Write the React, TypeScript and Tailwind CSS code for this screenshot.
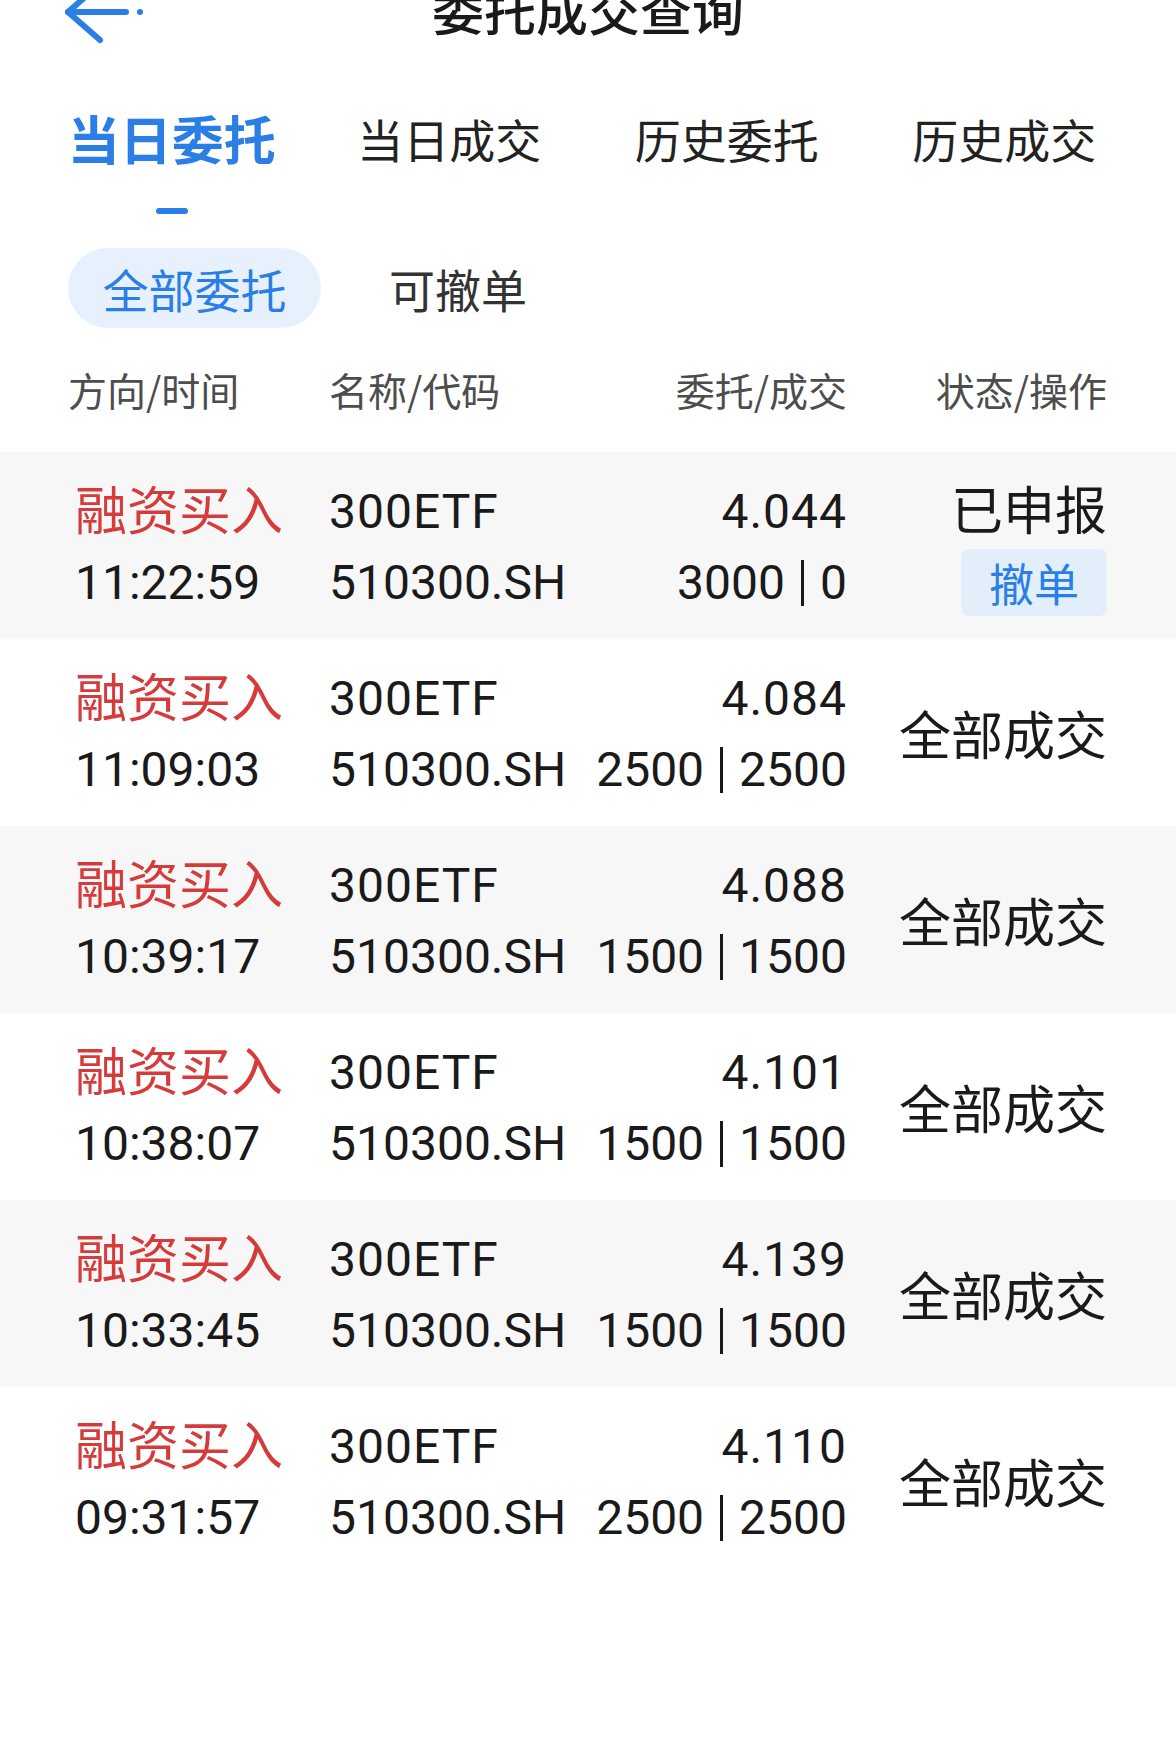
import React from 'react'

const CJK = '"Noto Sans CJK SC", "Noto Sans", sans-serif'
const NUM = 'Roboto, "Noto Sans CJK SC", sans-serif'

const orders = [
  { time: '11:22:59', price: '4.044', qty: '3000', done: '0', pending: true },
  { time: '11:09:03', price: '4.084', qty: '2500', done: '2500' },
  { time: '10:39:17', price: '4.088', qty: '1500', done: '1500' },
  { time: '10:38:07', price: '4.101', qty: '1500', done: '1500' },
  { time: '10:33:45', price: '4.139', qty: '1500', done: '1500' },
  { time: '09:31:57', price: '4.110', qty: '2500', done: '2500' },
]

const tabs = ['当日委托', '当日成交', '历史委托', '历史成交']

function BackArrow() {
  return (
    <svg width="85" height="45" viewBox="0 0 85 45" className="overflow-visible">
      <g stroke="#2a7ee6" strokeWidth="6" strokeLinecap="round" strokeLinejoin="round" fill="none">
        <path d="M38 -16 L6 12 L38 40" />
        <path d="M6 12 H64" />
      </g>
      <circle cx="78" cy="12" r="3" fill="#2a7ee6" />
    </svg>
  )
}

function OrderRow({ o, shaded }: { o: (typeof orders)[0]; shaded: boolean }) {
  return (
    <div
      className={`grid h-[187px] grid-cols-[254px_230px_288px_260px] pl-[75px] pr-[69px] pt-[18px] ${
        shaded ? 'bg-[#f7f7f7]' : 'bg-white'
      }`}
    >
      <div className="flex flex-col">
        <div className="h-[75px] text-[52px] leading-[75px] text-[#d63b3b]" style={{ fontFamily: CJK }}>
          融资买入
        </div>
        <div className="h-[75px] text-[48px] leading-[75px] text-[#1a1a1a]" style={{ fontFamily: NUM }}>
          {o.time}
        </div>
      </div>
      <div className="flex flex-col text-[48px] text-[#1a1a1a]" style={{ fontFamily: NUM }}>
        <div className="h-[75px] leading-[83px] tracking-[1px]">300ETF</div>
        <div className="h-[75px] leading-[75px]">510300.SH</div>
      </div>
      <div className="flex flex-col items-end text-[48px] text-[#1a1a1a]" style={{ fontFamily: NUM }}>
        <div className="h-[75px] leading-[83px] tracking-[1px]">{o.price}</div>
        <div className="h-[75px] whitespace-pre leading-[75px]">
          {o.qty}
          <span className="mx-[16px] inline-block h-[46px] w-[3px] translate-y-[7px] bg-[#1a1a1a]" />
          {o.done}
        </div>
      </div>
      {o.pending ? (
        <div className="flex flex-col items-end" style={{ fontFamily: CJK }}>
          <div className="h-[75px] text-[52px] leading-[75px] text-[#1a1a1a]">已申报</div>
          <div className="mt-[4px] flex h-[67px] w-[146px] items-center justify-center rounded-lg bg-[#e3eefb] text-[45px] leading-none text-[#2a7ee6]">
            撤单
          </div>
        </div>
      ) : (
        <div className="-mt-[18px] flex items-center justify-end" style={{ fontFamily: CJK }}>
          <div className="text-[52px] leading-[75px] text-[#1a1a1a]">全部成交</div>
        </div>
      )}
    </div>
  )
}

export default function App() {
  return (
    <div className="h-[1764px] w-[1176px] overflow-hidden bg-white" style={{ fontFamily: CJK }}>
      {/* nav bar */}
      <div className="grid h-[45px] grid-cols-[1fr_auto_1fr] items-start">
        <div className="pl-[62px]">
          <BackArrow />
        </div>
        <div className="-mt-[17px] text-[52px] font-medium leading-[52px] text-[#1a1a1a]">委托成交查询</div>
        <div />
      </div>

      {/* main tabs */}
      <div className="grid grid-cols-4 px-[33px]">
        {tabs.map((t, i) => (
          <div key={t} className="flex flex-col items-center">
            <div className="mt-[67px] flex h-[52px] items-center">
              <span
                className={
                  i === 0
                    ? 'text-[52px] font-semibold leading-[52px] text-[#2a7ee6]'
                    : 'text-[46px] leading-[46px] text-[#222]'
                }
              >
                {t}
              </span>
            </div>
            <div className={`mt-[44px] h-[6px] w-[32px] rounded-full ${i === 0 ? 'bg-[#2a7ee6]' : 'bg-transparent'}`} />
          </div>
        ))}
      </div>

      {/* sub tabs */}
      <div className="mt-[34px] flex items-center pl-[68px]">
        <div className="flex h-[80px] w-[253px] items-center justify-center rounded-full bg-[#e6f1fd] text-[46px] leading-none text-[#2a7ee6]">
          全部委托
        </div>
        <div className="ml-[68px] text-[46px] leading-none text-[#333]">可撤单</div>
      </div>

      {/* column header */}
      <div className="mt-[41px] grid h-[40px] grid-cols-[261px_230px_288px_260px] pl-[68px] pr-[69px] text-[39px] leading-[40px] text-[#4d4d4d]">
        <div>方向/时间</div>
        <div>名称/代码</div>
        <div className="text-right">委托/成交</div>
        <div className="text-right">状态/操作</div>
      </div>

      {/* orders */}
      <div className="mt-[43px]">
        {orders.map((o, i) => (
          <OrderRow key={o.time} o={o} shaded={i % 2 === 0} />
        ))}
      </div>
    </div>
  )
}
